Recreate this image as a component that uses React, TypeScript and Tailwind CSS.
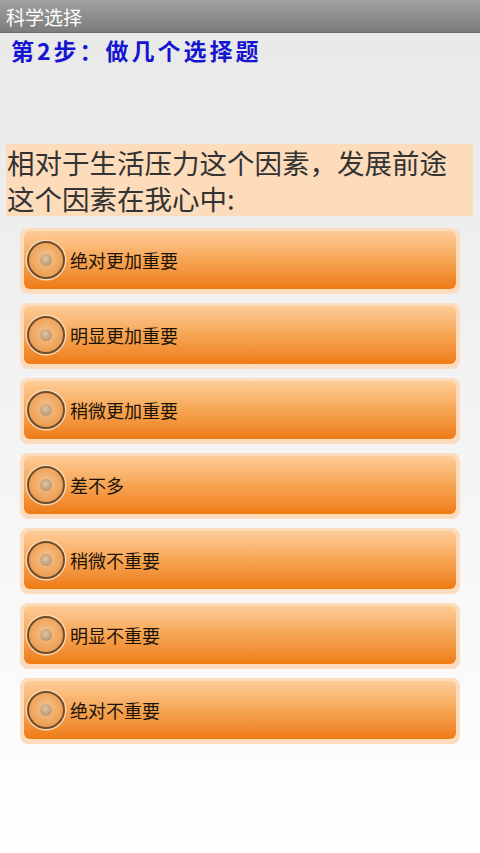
const options = [
  "绝对更加重要",
  "明显更加重要",
  "稍微更加重要",
  "差不多",
  "稍微不重要",
  "明显不重要",
  "绝对不重要",
];

const Radio = () => (
  <svg width="42" height="42" viewBox="0 0 42 42" className="shrink-0">
    <defs>
      <radialGradient id="rb" cx="50%" cy="45%" r="55%">
        <stop offset="0%" stopColor="#f6c592" />
        <stop offset="100%" stopColor="#ec9a4c" />
      </radialGradient>
      <radialGradient id="rd" cx="45%" cy="40%" r="60%">
        <stop offset="0%" stopColor="#e0c4a4" />
        <stop offset="100%" stopColor="#b8976f" />
      </radialGradient>
    </defs>
    <circle cx="21" cy="21" r="20.5" fill="#fcd6ae" />
    <circle cx="21" cy="21" r="18" fill="url(#rb)" stroke="#6e4c2c" strokeWidth="2" />
    <circle cx="21" cy="21" r="6" fill="url(#rd)" />
  </svg>
);

export default function App() {
  return (
    <div
      className="flex min-h-[853px] w-[480px] flex-col bg-gradient-to-b from-[#e8e8e8] to-[#ffffff]"
      style={{ fontFamily: '"Noto Sans CJK SC", "Liberation Sans", sans-serif' }}
    >
      <div className="flex h-[33px] items-center border-b border-[#6a6a6a] bg-gradient-to-b from-[#a2a2a2] to-[#7c7c7c] px-[6px]">
        <span className="text-[19px] leading-none text-white">科学选择</span>
      </div>

      <div className="h-[111px] px-[11px] pt-[2px]">
        <h1 className="text-[23px] font-bold leading-[30px] tracking-[3px] text-[#1515d0]">
          第2步：做几个选择题
        </h1>
      </div>

      <div className="mr-[7px] ml-[6px] bg-[#fddcbc] px-[1px]">
        <p className="text-[27.5px] leading-[36px] text-[#333333]">
          相对于生活压力这个因素，发展前途
          <br />
          这个因素在我心中:
        </p>
      </div>

      <div className="mt-[12px] flex flex-col gap-[9px] pl-[20px]">
        {options.map((item, index) => (
          <button
            key={item + index}
            className="h-[66px] w-[440px] rounded-[8px] bg-[#fddcbd] px-[4px] pt-[3px] pb-[5px] text-left"
          >
            <div className="flex h-full items-center gap-[3px] rounded-[6px] bg-gradient-to-b from-[#fdcc98] via-[#f6a552] to-[#ee7b0e] pl-[1px]">
              <Radio />
              <span className="text-[18px] leading-none text-[#1c1208]">{item}</span>
            </div>
          </button>
        ))}
      </div>
    </div>
  );
}
